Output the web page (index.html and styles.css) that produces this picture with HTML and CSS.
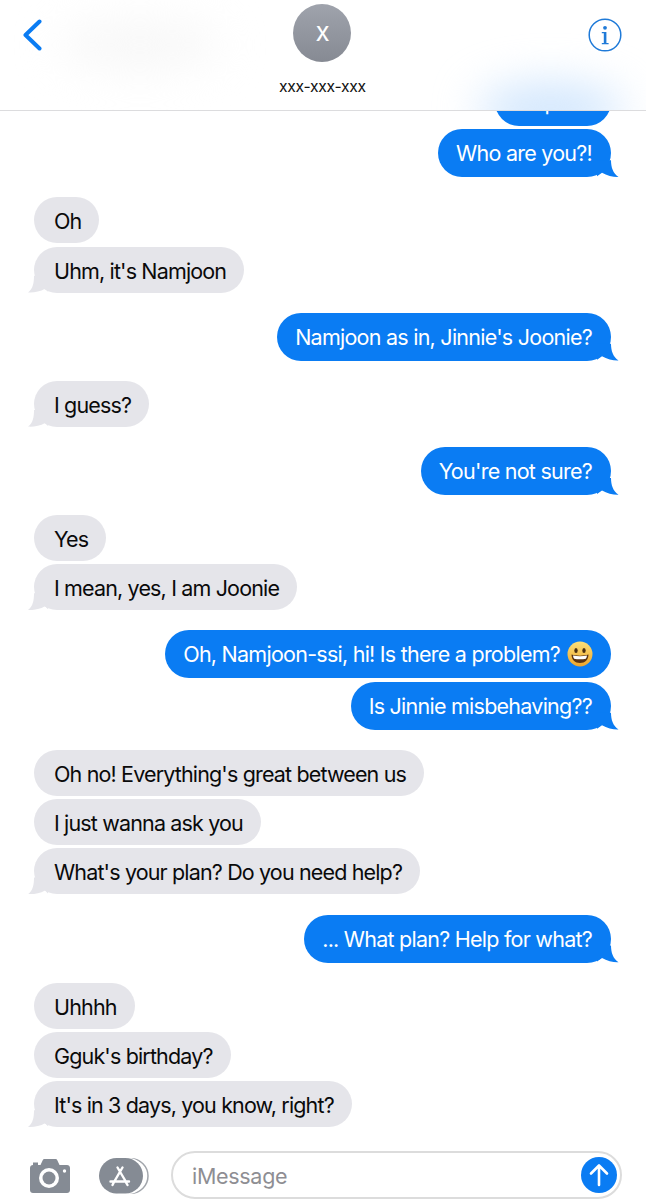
FILE: index.html
```html
<!DOCTYPE html>
<html lang="en">
<head>
<meta charset="utf-8">
<title>Messages</title>
<link rel="stylesheet" href="styles.css">
</head>
<body>
<div class="phone">
  <header class="nav">
    <div class="blur blur-name"></div>
    <div class="blur blur-blue"></div>
    <svg class="back" width="20" height="32" viewBox="0 0 20 32"><path d="M17.500 2.500 3.500 16l14 13.500" fill="none" stroke="#0a7cf3" stroke-width="4" stroke-linecap="round" stroke-linejoin="round"/></svg>
    <div class="contact">
      <div class="avatar">x</div>
      <div class="number">xxx-xxx-xxx</div>
    </div>
    <svg class="info" width="34" height="34" viewBox="0 0 34 34"><circle cx="17" cy="17" r="15.800" fill="none" stroke="#1f7ad8" stroke-width="1.500"/><circle cx="17" cy="9.800" r="1.900" fill="#1f7ad8"/><path d="M13.800 14h4.600v11h2.200v1.300h-6.800V25h2V15.300h-2z" fill="#1f7ad8"/></svg>
  </header>

  <main class="thread">
    <section class="group sent first">
      <div class="bubble">Help me</div>
      <div class="bubble tail">Who are you?!</div>
    </section>
    <section class="group received">
      <div class="bubble">Oh</div>
      <div class="bubble tail">Uhm, it's Namjoon</div>
    </section>
    <section class="group sent">
      <div class="bubble tail">Namjoon as in, Jinnie's Joonie?</div>
    </section>
    <section class="group received">
      <div class="bubble tail">I guess?</div>
    </section>
    <section class="group sent">
      <div class="bubble tail">You're not sure?</div>
    </section>
    <section class="group received">
      <div class="bubble">Yes</div>
      <div class="bubble tail">I mean, yes, I am Joonie</div>
    </section>
    <section class="group sent">
      <div class="bubble">Oh, Namjoon-ssi, hi! Is there a problem?
        <svg class="emoji" width="26" height="26" viewBox="0 0 26 26">
          <defs><linearGradient id="face" x1="0" y1="0" x2="0" y2="1"><stop offset="0" stop-color="#fbe07a"/><stop offset="1" stop-color="#eea52a"/></linearGradient></defs>
          <circle cx="13" cy="13" r="12.500" fill="url(#face)"/>
          <ellipse cx="9" cy="9.500" rx="1.700" ry="2.500" fill="#4a2f12"/>
          <ellipse cx="17" cy="9.500" rx="1.700" ry="2.500" fill="#4a2f12"/>
          <path d="M4.500 13.500c5 1.500 12 1.500 17 0 0 5-3.500 8.500-8.500 8.500s-8.500-3.500-8.500-8.500z" fill="#5a3413"/>
          <path d="M6 14.500c4.500 1 9.500 1 14 0-.2 1.500-.6 2.500-1.200 3.200-3.500.7-8.100.7-11.600 0-.6-.7-1-1.700-1.200-3.200z" fill="#fff"/>
        </svg>
      </div>
      <div class="bubble tail">Is Jinnie misbehaving??</div>
    </section>
    <section class="group received">
      <div class="bubble">Oh no! Everything's great between us</div>
      <div class="bubble">I just wanna ask you</div>
      <div class="bubble tail">What's your plan? Do you need help?</div>
    </section>
    <section class="group sent">
      <div class="bubble tail">... What plan? Help for what?</div>
    </section>
    <section class="group received">
      <div class="bubble">Uhhhh</div>
      <div class="bubble">Gguk's birthday?</div>
      <div class="bubble tail">It's in 3 days, you know, right?</div>
    </section>
  </main>

  <footer class="composer">
    <svg class="camera" width="40" height="34" viewBox="0 0 40 34">
      <path d="M3 3.500h5V6h2.500l2.200-4.800C13 .4 13.600 0 14.400 0h11.200c.8 0 1.400.4 1.700 1.200L29.500 6H37c1.700 0 3 1.300 3 3v22c0 1.700-1.300 3-3 3H3c-1.700 0-3-1.300-3-3V9c0-1.700 1.300-3 3-3z" fill="#858b94"/>
      <circle cx="19" cy="19" r="10" fill="#fff"/>
      <circle cx="19" cy="19" r="6.500" fill="#858b94"/>
      <circle cx="34.500" cy="12" r="1.700" fill="#fff"/>
    </svg>
    <svg class="apps" width="50" height="36" viewBox="0 0 50 36">
      <rect x="4" y="0.800" width="45" height="34.400" rx="17.200" fill="none" stroke="#a2a6ac" stroke-width="1.500"/>
      <rect x="2" y="0" width="45" height="36" rx="18" fill="#fff"/>
      <rect x="0" y="0" width="44" height="35.500" rx="17.700" fill="#858b94"/>
      <path d="M23.500 9.500 15 24M18.500 9.500 26.500 23M11.500 23.500h18.500M13.500 27l1.500-3M27 24.500l1.500 2.500" fill="none" stroke="#fff" stroke-width="2.400" stroke-linecap="round"/>
    </svg>
    <div class="field">
      <span class="placeholder">iMessage</span>
      <span class="send">
        <svg width="22" height="24" viewBox="0 0 22 24"><path d="M11 22V3M3 10.500 11 2.500l8 8" fill="none" stroke="#fff" stroke-width="2.600" stroke-linecap="round" stroke-linejoin="round"/></svg>
      </span>
    </div>
  </footer>
</div>
</body>
</html>
```

FILE: styles.css
```css
* { box-sizing: border-box; }

html, body {
  margin: 0;
  padding: 0;
  background: #fff;
}

.phone {
  width: 646px;
  height: 1200px;
  display: flex;
  flex-direction: column;
  overflow: hidden;
  font-family: Inter, "Liberation Sans", sans-serif;
  background: #fff;
}

/* Navigation bar */
.nav {
  position: relative;
  z-index: 2;
  flex: none;
  height: 111px;
  display: flex;
  justify-content: space-between;
  padding: 4px 24px 0 22px;
  background: #fff;
  border-bottom: 1.500px solid #dcdcde;
  overflow: hidden;
}

.back { margin-top: 15px; position: relative; }
.info { margin-top: 14px; position: relative; }

.contact {
  position: relative;
  display: flex;
  flex-direction: column;
  align-items: center;
  margin-left: 15px;
}

.avatar {
  width: 58px;
  height: 58px;
  border-radius: 50%;
  display: flex;
  align-items: center;
  justify-content: center;
  background: linear-gradient(#9fa3ac, #868a93);
  color: #fff;
  font-size: 26px;
  padding-bottom: 4px;
}

.number {
  margin-top: 15px;
  font-size: 15.700px;
  letter-spacing: -0.300px;
  line-height: 20px;
  color: #111;
}

.blur {
  position: absolute;
  border-radius: 50%;
  filter: blur(22px);
}

.blur-name {
  left: 60px;
  top: 22px;
  width: 160px;
  height: 46px;
  background: #f7f7f7;
}

.blur-blue {
  left: 478px;
  top: 84px;
  width: 145px;
  height: 52px;
  background: #cfe5fd;
}

/* Message thread */
.thread {
  flex: 1;
  min-height: 0;
  display: flex;
  flex-direction: column;
  gap: 20.100px;
  overflow: hidden;
}

.group {
  display: flex;
  flex-direction: column;
  gap: 3.300px;
}

.first { margin-top: -33px; }

.bubble {
  position: relative;
  display: flex;
  align-items: center;
  gap: 7px;
  font-size: 21.500px;
  letter-spacing: -0.750px;
  white-space: nowrap;
  border-radius: 24px;
}

.sent { align-items: flex-end; padding-right: 35px; }
.received { align-items: flex-start; padding-left: 34px; }

.sent .bubble {
  height: 48px;
  padding: 0 19px 0 18px;
  background: #0a7cf3;
  color: #fff;
}

.received .bubble {
  height: 46px;
  padding: 2px 18px 0 20px;
  letter-spacing: -0.850px;
  background: #e5e5ea;
  color: #0a0a0a;
}

.tail::after {
  content: "";
  position: absolute;
  bottom: 0;
  width: 22px;
  height: 22px;
  background: inherit;
}

.sent .tail::after {
  right: -8px;
  clip-path: path("M0 5 L14 5 C14 12, 16 18, 21.500 21.700 C17 22, 10 20.500, 5 17.500 L0 21 Z");
}

.received .tail::after {
  left: -6px;
  clip-path: path("M20 5 L6 5 C6 12, 5 18, 0 21.700 C5 22.200, 12 21, 17 18 L20 21 Z");
}

.emoji { flex: none; margin-right: -1px; }

/* Composer */
.composer {
  flex: none;
  height: 66px;
  display: flex;
  align-items: flex-start;
  padding: 17px 24px 3px 30px;
  background: #fff;
  position: relative;
  z-index: 2;
}

.camera { flex: none; margin-top: 8px; }
.apps { flex: none; margin: 7px 0 0 29px; }

.field {
  flex: 1;
  height: 48px;
  margin: 0 0 0 22px;
  display: flex;
  align-items: center;
  justify-content: space-between;
  padding: 0 3px 0 19px;
  border: 2px solid #dcdcdc;
  border-radius: 24px;
}

.placeholder {
  font-size: 21.500px;
  letter-spacing: -0.300px;
  color: #8e8e93;
  padding-top: 2px;
}

.send {
  width: 36px;
  height: 36px;
  border-radius: 50%;
  display: flex;
  align-items: center;
  justify-content: center;
  background: #0a7cf3;
}
```
